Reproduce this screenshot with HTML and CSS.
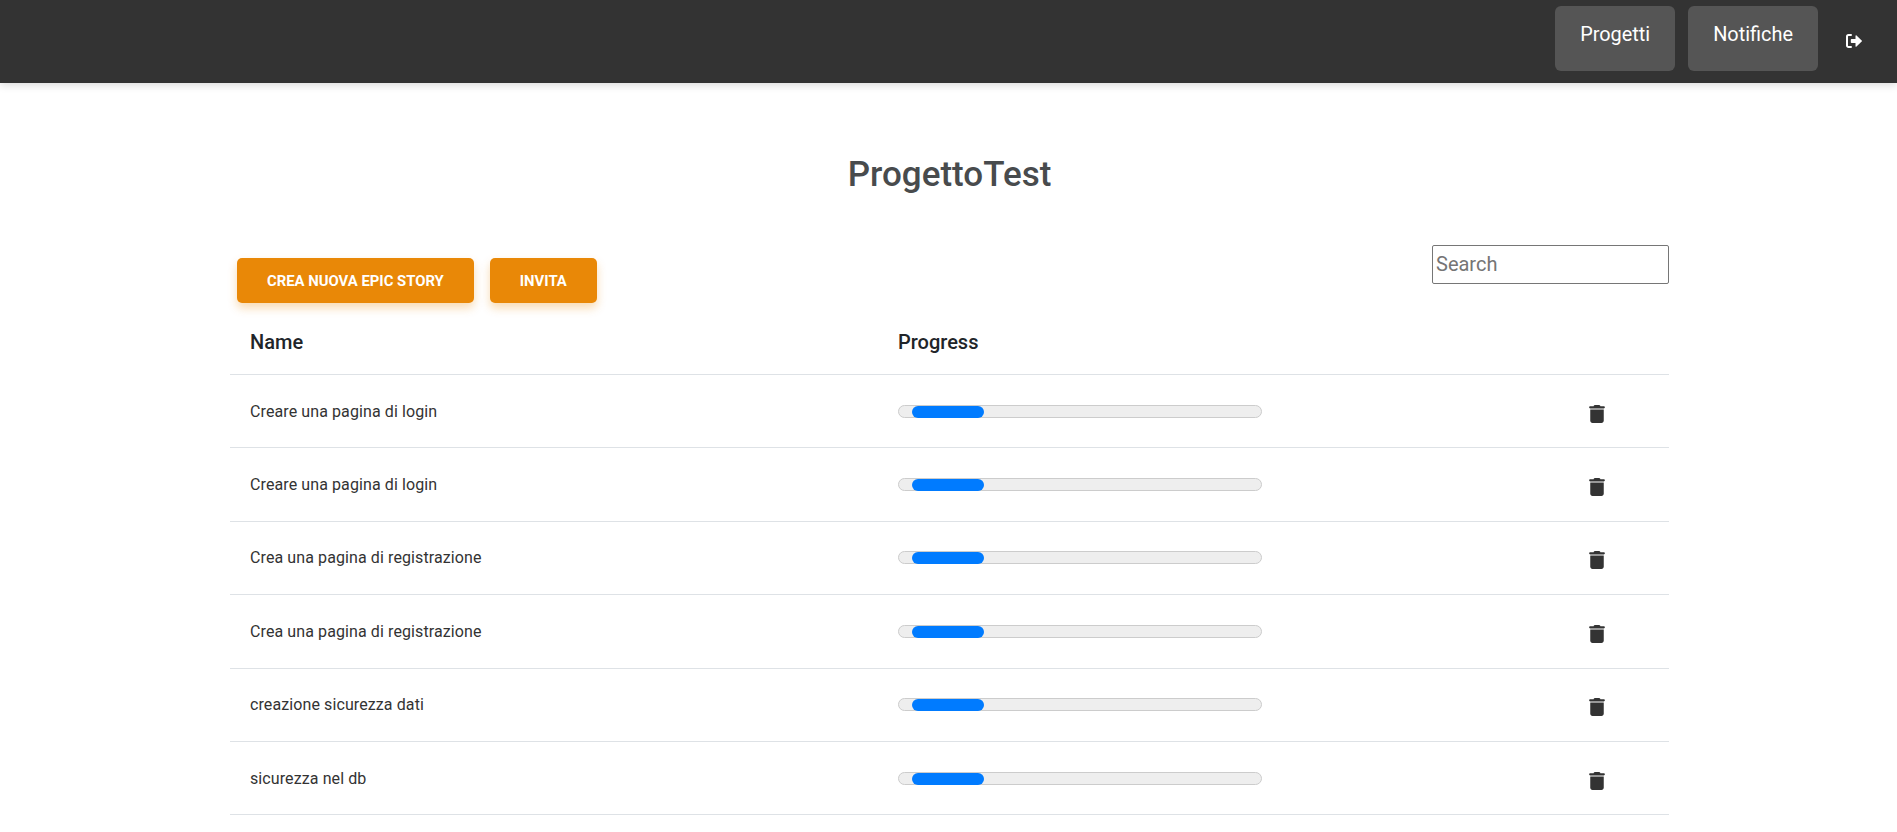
FILE: index.html
```html
<!DOCTYPE html>
<html lang="en">
<head>
  <meta charset="UTF-8">
  <meta name="viewport" content="width=device-width, initial-scale=1.0">
  <title>ProgettoTest</title>
  <link rel="stylesheet" href="styles.css">
</head>
<body>
  <svg class="icon-defs" aria-hidden="true">
    <symbol id="trash" viewBox="0 0 448 512"><path d="M135.200 17.700C140.600 6.800 151.700 0 163.800 0h120.400c12.100 0 23.200 6.800 28.600 17.700L320 32h96c17.700 0 32 14.300 32 32s-14.300 32-32 32H32C14.300 96 0 81.700 0 64s14.300-32 32-32h96l7.200-14.300zM32 128h384v320c0 35.300-28.700 64-64 64H96c-35.300 0-64-28.700-64-64V128z"/></symbol>
  </svg>

  <header class="topbar">
    <a class="nav-btn" href="#">Progetti</a>
    <a class="nav-btn" href="#">Notifiche</a>
    <a class="logout" href="#" aria-label="Logout">
      <svg width="18" height="16" viewBox="0 0 18 16"><path fill="none" stroke="#fff" stroke-width="2" stroke-linecap="round" d="M6 2H3.500A1.500 1.500 0 0 0 2 3.500v9A1.500 1.500 0 0 0 3.500 14H6"/><path fill="#fff" d="M10.500 2.800c0-.5.6-.8 1-.4l5.200 5a.8.8 0 0 1 0 1.200l-5.200 5c-.4.4-1 .1-1-.4V10H6.600a.8.8 0 0 1-.8-.8V6.800a.8.8 0 0 1 .8-.8h3.900z"/></svg>
    </a>
  </header>

  <main class="content">
    <h1 class="page-title">ProgettoTest</h1>

    <div class="toolbar">
      <div class="actions">
        <button class="action-btn">Crea nuova epic story</button>
        <button class="action-btn">Invita</button>
      </div>
      <input class="search" type="text" placeholder="Search">
    </div>

    <table class="stories">
      <thead>
        <tr><th class="col-name">Name</th><th class="col-progress">Progress</th><th></th></tr>
      </thead>
      <tbody>
        <tr>
          <td>Creare una pagina di login</td>
          <td><div class="progress"><div class="progress-fill"></div></div></td>
          <td><svg class="trash"><use href="#trash"/></svg></td>
        </tr>
        <tr>
          <td>Creare una pagina di login</td>
          <td><div class="progress"><div class="progress-fill"></div></div></td>
          <td><svg class="trash"><use href="#trash"/></svg></td>
        </tr>
        <tr>
          <td>Crea una pagina di registrazione</td>
          <td><div class="progress"><div class="progress-fill"></div></div></td>
          <td><svg class="trash"><use href="#trash"/></svg></td>
        </tr>
        <tr>
          <td>Crea una pagina di registrazione</td>
          <td><div class="progress"><div class="progress-fill"></div></div></td>
          <td><svg class="trash"><use href="#trash"/></svg></td>
        </tr>
        <tr>
          <td>creazione sicurezza dati</td>
          <td><div class="progress"><div class="progress-fill"></div></div></td>
          <td><svg class="trash"><use href="#trash"/></svg></td>
        </tr>
        <tr>
          <td>sicurezza nel db</td>
          <td><div class="progress"><div class="progress-fill"></div></div></td>
          <td><svg class="trash"><use href="#trash"/></svg></td>
        </tr>
      </tbody>
    </table>
  </main>
</body>
</html>
```
FILE: styles.css
```css
body {
  margin: 0;
  font-family: Roboto, sans-serif;
  background: #fff;
  overflow: hidden;
}

.icon-defs {
  display: none;
}

.topbar {
  display: flex;
  justify-content: flex-end;
  align-items: flex-start;
  gap: 13px;
  height: 83px;
  padding: 6px 34px 0 0;
  box-sizing: border-box;
  background: #333;
  box-shadow: 0 2px 8px rgba(0, 0, 0, 0.15);
}

.nav-btn {
  display: block;
  height: 65px;
  padding: 17px 25px 0;
  box-sizing: border-box;
  background: #555;
  border-radius: 6px;
  color: #fff;
  font-size: 19.900px;
  line-height: 23px;
  text-decoration: none;
}

.logout {
  display: flex;
  margin: 27px 0 0 14px;
}

.content {
  width: 1439px;
  margin: 0 0 0 230px;
}

.page-title {
  margin: 0;
  padding-top: 72px;
  height: 162px;
  box-sizing: border-box;
  text-align: center;
  font-size: 35px;
  line-height: 40px;
  font-weight: 500;
  color: #484b4d;
}

.toolbar {
  display: flex;
  justify-content: space-between;
  align-items: flex-start;
  height: 86px;
}

.actions {
  display: flex;
  gap: 16px;
  padding: 13px 0 0 7px;
}

.action-btn {
  height: 45px;
  padding: 0 30px;
  border: none;
  border-radius: 5px;
  background: #e98807;
  box-shadow: 0 5px 10px rgba(233, 136, 7, 0.3);
  color: #fff;
  font-family: inherit;
  font-size: 14.850px;
  font-weight: 700;
  text-transform: uppercase;
}

.search {
  width: 237px;
  height: 39px;
  padding: 0 3px 2px;
  box-sizing: border-box;
  border: 1px solid #767676;
  border-radius: 2px;
  font-family: inherit;
  font-size: 20px;
}

.stories {
  width: 100%;
  border-collapse: collapse;
  table-layout: fixed;
  color: #333;
}

.stories th {
  padding: 0 20px 20px;
  text-align: left;
  font-size: 20px;
  line-height: 23px;
  font-weight: 500;
  color: #212529;
  border-bottom: 1px solid #dee2e6;
}

.col-name {
  width: 608px;
}

.col-progress {
  width: 648px;
}

.stories td {
  height: 72.400px;
  padding: 0 20px;
  font-size: 16px;
  letter-spacing: 0.1px;
  border-bottom: 1px solid #dee2e6;
}

.progress {
  width: 364px;
  height: 13px;
  padding-left: 13px;
  box-sizing: border-box;
  background: #eee;
  border: 1px solid #ccc;
  border-radius: 7px;
}

.progress-fill {
  width: 72px;
  height: 12px;
  background: #007bff;
  border-radius: 6px;
}

.trash {
  display: block;
  width: 16px;
  height: 18px;
  margin: 5px 0 0 3px;
  fill: #333;
}
```
